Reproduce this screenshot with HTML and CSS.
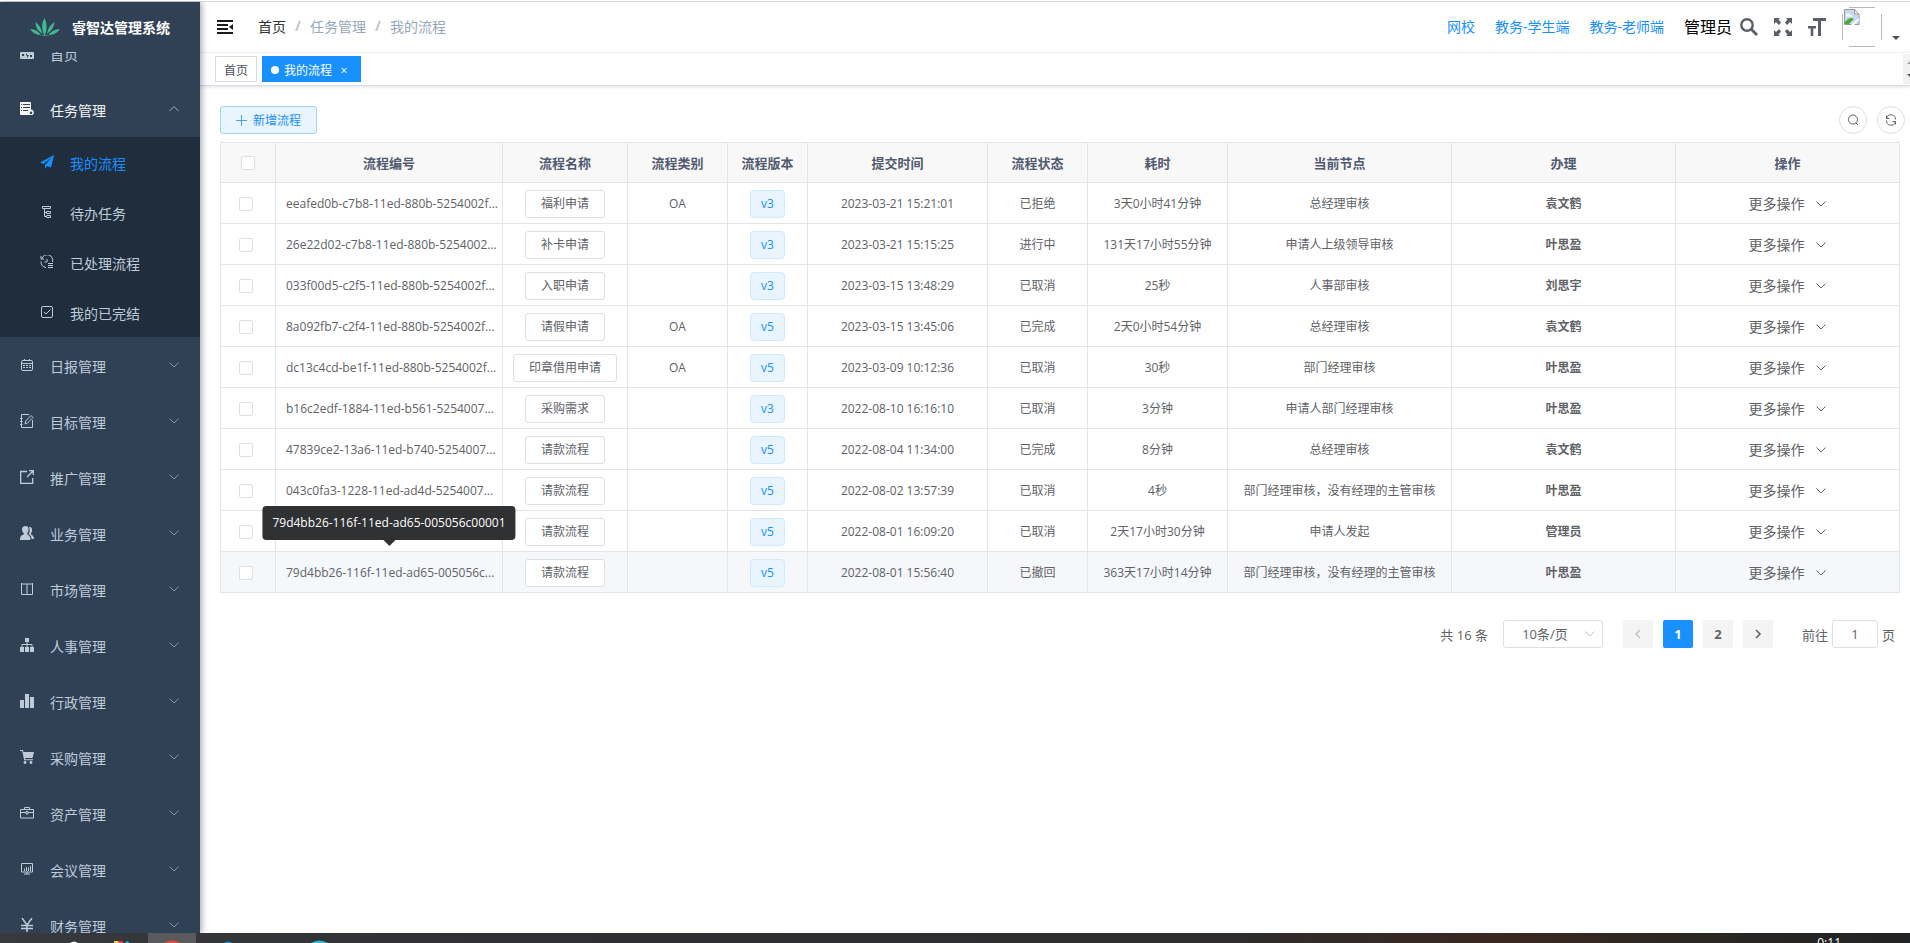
FILE: index.html
```html
<!DOCTYPE html>
<html lang="zh-CN">
<head>
<meta charset="utf-8">
<title>我的流程 - 睿智达管理系统</title>
<link rel="stylesheet" href="styles.css">
</head>
<body>
<svg class="sprite" aria-hidden="true">
  <symbol id="down" viewBox="0 0 12 12"><path d="M1.500 3.500 6 8l4.500-4.500" fill="none" stroke="currentColor"/></symbol>
  <symbol id="up" viewBox="0 0 12 12"><path d="M1.500 8 6 3.500 10.500 8" fill="none" stroke="currentColor"/></symbol>
  <symbol id="left" viewBox="0 0 12 12"><path d="M8 2 4 6l4 4" fill="none" stroke="currentColor" stroke-width="1.600"/></symbol>
  <symbol id="right" viewBox="0 0 12 12"><path d="m4 2 4 4-4 4" fill="none" stroke="currentColor" stroke-width="1.600"/></symbol>
  <symbol id="home" viewBox="0 0 14 14"><path fill="currentColor" fill-rule="evenodd" d="M1 6h12q1 0 1 1v5q0 1-1 1H1q-1 0-1-1V7q0-1 1-1ZM2 8v2h2V8Zm8 1v2h2V9ZM7 7 5.500 9.500H7V12l2-3H7Z"/></symbol>
  <symbol id="task" viewBox="0 0 14 14"><path fill="currentColor" fill-rule="evenodd" d="M1 0h9q1 0 1 1v6.500a3 3 0 0 1 1.500 5.500H1Q0 13 0 12V1Q0 0 1 0ZM1 2v1h1V2Zm2 0v1h7V2ZM1 5v1h1V5Zm2 0v1h7V5ZM1 8v1h1V8Zm2 0v1h5V8Zm8 1.500a1.300 1.300 0 1 0 .1 0Z"/></symbol>
  <symbol id="plane" viewBox="0 0 14 14"><path fill="currentColor" d="M14 0 0 7.500l3.500 1.500L12 2 5 10v4l2-3 4 1.500Z"/></symbol>
  <symbol id="tree" viewBox="0 0 14 14"><path d="M2.500 1.500h8v2h-8zM4.500 3.500v8h2M4.500 7.500h2M6.500 6.500h4v2h-4zM6.500 10.500h4v2h-4z" fill="none" stroke="currentColor"/></symbol>
  <symbol id="history" viewBox="0 0 14 14"><path d="M2 3.500A5.500 5.500 0 0 1 12.500 7M1 6.500a5.500 5.500 0 0 0 5 6M1 1v3h3M7 4v3H4.500" fill="none" stroke="currentColor"/><path d="M8 8.500h5M8 10.500h5M8 12.500h5" stroke="currentColor"/></symbol>
  <symbol id="done" viewBox="0 0 14 14"><rect x="1.500" y="1.500" width="11" height="11" rx="1.500" fill="none" stroke="currentColor"/><path d="m4 7 2 2 4.500-4.500" fill="none" stroke="currentColor"/></symbol>
  <symbol id="cal" viewBox="0 0 14 14"><rect x="1.500" y="2.500" width="11" height="10" rx="1.500" fill="none" stroke="currentColor"/><path d="M1 5.500h12M4.500 1v2M9.500 1v2" stroke="currentColor"/><path d="M3 7.500h8M3 9.500h8" stroke="currentColor" stroke-dasharray="2 1"/></symbol>
  <symbol id="edit" viewBox="0 0 14 14"><path d="M9 .5H1.500v13h11V6M0 4.500h2.500M0 7.500h2.500M0 10.500h2.500M5 10l.7-3L11 1.500l2 2L7.500 9Z" fill="none" stroke="currentColor"/></symbol>
  <symbol id="share" viewBox="0 0 14 14"><path d="M7 1.500H.7v12h12V8M7 7l6-6M9 .7h4.300V5" fill="none" stroke="currentColor" stroke-width="1.300"/></symbol>
  <symbol id="people" viewBox="0 0 14 14"><path fill="currentColor" d="M5.500 0Q9 0 8.500 4 8.300 6.500 7 7.500q.3 1 2 2 1.500 1 1.500 4.500H0Q0 10 2 9.300q2-.8 2-1.800Q2 6 2 3.500 2 0 5.500 0ZM9 1q3.500-.5 3 4-.3 2-1.500 3 3.500 1.500 3.500 5h-2.500Q11.500 9.500 8.500 8 10.500 5 9 1Z"/></symbol>
  <symbol id="cols" viewBox="0 0 14 14"><path d="M1 2h12M1.500 1v11.500h11V1M7 2v10.500" fill="none" stroke="currentColor"/></symbol>
  <symbol id="org" viewBox="0 0 14 14"><path fill="currentColor" d="M5 0h4v4H5zM0 9h4v5H0zM5 9h4v5H5zM10 9h4v5h-4z"/><path d="M7 4v5M2 9V6.500h10V9" fill="none" stroke="currentColor"/></symbol>
  <symbol id="bars" viewBox="0 0 14 14"><path fill="currentColor" d="M0 6h4v8H0zM5 0h4v14H5zM10 3h4v11h-4z"/></symbol>
  <symbol id="cart" viewBox="0 0 14 14"><path fill="currentColor" d="M0 0h3l.5 2H14l-1.500 6H5l.3 1.300H13v1H4.200L2.200 1H0z"/><circle cx="5" cy="12.500" r="1.400" fill="currentColor"/><circle cx="11" cy="12.500" r="1.400" fill="currentColor"/></symbol>
  <symbol id="case" viewBox="0 0 14 14"><path d="M.5 3.500h13v8.500H.5zM4.500 3.500v-2h5v2M.5 6.500H6M8 6.500h5.500M6 5.500h2V8H6z" fill="none" stroke="currentColor"/></symbol>
  <symbol id="board" viewBox="0 0 14 14"><path d="M1.500 1.500h11v8.500h-11zM7 10v2M4 12h6M4.500 9V6.500M6.500 9V5M8.500 9V5.500M10.500 9V4" fill="none" stroke="currentColor"/></symbol>
  <symbol id="yen" viewBox="0 0 14 14"><path d="m2 0 5 7 5-7M7 7v7M1 7.500h12M1 10.500h12" fill="none" stroke="currentColor" stroke-width="1.500"/></symbol>
</svg>

<div class="app">
  <aside class="sidebar">
    <a class="logo" href="#">
      <svg width="30" height="18" viewBox="0 0 30 18" fill="#43b692"><path d="M14 17Q10 7 14.500 0q4 8 .5 17ZM12.500 16Q5 11 5.500 4 11 8 12.500 16ZM17 16q1-8 7.500-12Q24 11 17 16ZM11 17Q4 17 0 11q7 0 11 6ZM18.500 17q4-6 11.500-6-4 6-11.500 6ZM10 18q5-1.500 10 0Z"/></svg>
      <span>睿智达管理系统</span>
    </a>
    <nav class="menu">
      <ul class="menu-list">
        <li><a class="item" href="#"><svg><use href="#home"/></svg><span>首页</span></a></li>
        <li><a class="item open" href="#"><svg><use href="#task"/></svg><span>任务管理</span><svg class="arrow"><use href="#up"/></svg></a>
          <ul class="submenu">
            <li><a class="item active" href="#"><svg><use href="#plane"/></svg><span>我的流程</span></a></li>
            <li><a class="item" href="#"><svg><use href="#tree"/></svg><span>待办任务</span></a></li>
            <li><a class="item" href="#"><svg><use href="#history"/></svg><span>已处理流程</span></a></li>
            <li><a class="item" href="#"><svg><use href="#done"/></svg><span>我的已完结</span></a></li>
          </ul>
        </li>
        <li><a class="item" href="#"><svg><use href="#cal"/></svg><span>日报管理</span><svg class="arrow"><use href="#down"/></svg></a></li>
        <li><a class="item" href="#"><svg><use href="#edit"/></svg><span>目标管理</span><svg class="arrow"><use href="#down"/></svg></a></li>
        <li><a class="item" href="#"><svg><use href="#share"/></svg><span>推广管理</span><svg class="arrow"><use href="#down"/></svg></a></li>
        <li><a class="item" href="#"><svg><use href="#people"/></svg><span>业务管理</span><svg class="arrow"><use href="#down"/></svg></a></li>
        <li><a class="item" href="#"><svg><use href="#cols"/></svg><span>市场管理</span><svg class="arrow"><use href="#down"/></svg></a></li>
        <li><a class="item" href="#"><svg><use href="#org"/></svg><span>人事管理</span><svg class="arrow"><use href="#down"/></svg></a></li>
        <li><a class="item" href="#"><svg><use href="#bars"/></svg><span>行政管理</span><svg class="arrow"><use href="#down"/></svg></a></li>
        <li><a class="item" href="#"><svg><use href="#cart"/></svg><span>采购管理</span><svg class="arrow"><use href="#down"/></svg></a></li>
        <li><a class="item" href="#"><svg><use href="#case"/></svg><span>资产管理</span><svg class="arrow"><use href="#down"/></svg></a></li>
        <li><a class="item" href="#"><svg><use href="#board"/></svg><span>会议管理</span><svg class="arrow"><use href="#down"/></svg></a></li>
        <li><a class="item" href="#"><svg><use href="#yen"/></svg><span>财务管理</span><svg class="arrow"><use href="#down"/></svg></a></li>
      </ul>
    </nav>
  </aside>

  <main class="main">
    <header class="navbar">
      <button class="plain" aria-label="收起菜单"><svg width="16" height="14" viewBox="0 0 16 14"><path d="M0 1h16M0 5h11M0 9h11M0 13h16" stroke="#1a1a1a" stroke-width="1.800"/><path d="M16 4v6l-4-3z" fill="#1a1a1a"/></svg></button>
      <nav class="crumbs"><a class="first" href="#">首页</a><i>/</i><span>任务管理</span><i>/</i><span>我的流程</span></nav>
      <div class="right">
        <a href="#">网校</a><a href="#">教务-学生端</a><a href="#">教务-老师端</a>
        <div class="tools">
          <span class="user">管理员</span>
          <button class="plain" aria-label="搜索"><svg width="18" height="18" viewBox="0 0 18 18"><circle cx="7" cy="7" r="5.700" fill="none" stroke="#5a5e66" stroke-width="2.400"/><path d="m11 11 6 6" stroke="#5a5e66" stroke-width="2.800"/></svg></button>
          <button class="plain" aria-label="全屏"><svg width="18" height="18" viewBox="0 0 18 18"><path fill="#5a5e66" d="M0 0h6L4.500 1.500 7 4.500 5 7 2 4 0 6zM18 0v6l-2-2-3 3-2-2.500 2.500-3L12 0zM0 18v-6l2 2 3-3 2 2.500-2.500 3L6 18zM18 18h-6l1.500-1.500-2.500-3 2-2.500 3 3 2-2z"/></svg></button>
          <button class="plain" aria-label="字号"><svg width="18" height="18" viewBox="0 0 18 18"><path fill="#5a5e66" d="M5 0h13v3h-5v15h-3V3H5zM0 8h8v2.500H5.300V18H2.700v-7.500H0z"/></svg></button>
          <button class="plain avatar" aria-label="用户菜单">
            <svg width="40" height="40" viewBox="0 0 40 40"><path d="M7 .5h26M7 39.500h26M.5 7v26M39.500 7v26" stroke="#b8b8b8"/><path d="M2.500 2.500h10l4.500 4.500v10.500h-14.500z" fill="#c9daf8" stroke="#9a9a9a"/><path d="M12.500 2.500V7H17z" fill="#fff" stroke="#9a9a9a"/><path d="M4 8q2-3 4 0h2v1.500H4z" fill="#fff"/><path d="M3 17v-2q5-6 9-3l-5 5z" fill="#4eaa2f"/><path d="m9 18 8-7v2l-5 5z" fill="#fff"/></svg>
            <svg width="8" height="4" viewBox="0 0 8 4"><path d="M0 0h8L4 4z" fill="#4a4f57"/></svg>
          </button>
        </div>
      </div>
    </header>

    <div class="tags">
      <a class="tag" href="#">首页</a>
      <a class="tag current" href="#"><b class="dot"></b>我的流程<span class="close">×</span></a>
      <div class="scroller"><svg width="7" height="30" viewBox="0 0 7 30"><path d="m7 7-3 3h3z" fill="#a3a3a3"/><path d="m4 20 3 3v-3z" fill="#505050"/></svg></div>
    </div>

    <section class="content">
      <div class="toolbar">
        <button class="add"><svg width="11" height="11" viewBox="0 0 11 11"><path d="M0 5.500h11M5.500 0v11" stroke="#1890ff" stroke-opacity=".8"/></svg>新增流程</button>
        <div class="round-group">
          <button class="round" aria-label="搜索"><svg width="12" height="12" viewBox="0 0 12 12" fill="none" stroke="#606266"><circle cx="6" cy="5.500" r="4.500"/><path d="m9 9 2 2"/></svg></button>
          <button class="round" aria-label="刷新"><svg width="12" height="12" viewBox="0 0 12 12" fill="none" stroke="#606266"><path d="M1.500 1.500V4.500h3M1.700 4A4.500 4.500 0 0 1 10.500 5.500M10.500 10.500v-3h-3M10.300 8A4.500 4.500 0 0 1 1.500 6.500"/></svg></button>
        </div>
      </div>

      <table class="grid">
        <colgroup><col class="c-check"><col class="c-id"><col class="c-name"><col class="c-100"><col class="c-80"><col class="c-180"><col class="c-100"><col class="c-140"><col><col><col></colgroup>
        <thead><tr><th><input type="checkbox" aria-label="全选"></th><th>流程编号</th><th>流程名称</th><th>流程类别</th><th>流程版本</th><th>提交时间</th><th>流程状态</th><th>耗时</th><th>当前节点</th><th>办理</th><th>操作</th></tr></thead>
        <tbody>
          <tr><td><input type="checkbox" aria-label="选择"></td><td class="id">eeafed0b-c7b8-11ed-880b-5254002f...</td><td><button class="name">福利申请</button></td><td>OA</td><td><span class="ver">v3</span></td><td>2023-03-21 15:21:01</td><td>已拒绝</td><td>3天0小时41分钟</td><td>总经理审核</td><td><b>袁文鹤</b></td><td><button class="more">更多操作<svg><use href="#down"/></svg></button></td></tr>
          <tr><td><input type="checkbox" aria-label="选择"></td><td class="id">26e22d02-c7b8-11ed-880b-5254002...</td><td><button class="name">补卡申请</button></td><td></td><td><span class="ver">v3</span></td><td>2023-03-21 15:15:25</td><td>进行中</td><td>131天17小时55分钟</td><td>申请人上级领导审核</td><td><b>叶思盈</b></td><td><button class="more">更多操作<svg><use href="#down"/></svg></button></td></tr>
          <tr><td><input type="checkbox" aria-label="选择"></td><td class="id">033f00d5-c2f5-11ed-880b-5254002f...</td><td><button class="name">入职申请</button></td><td></td><td><span class="ver">v3</span></td><td>2023-03-15 13:48:29</td><td>已取消</td><td>25秒</td><td>人事部审核</td><td><b>刘思宇</b></td><td><button class="more">更多操作<svg><use href="#down"/></svg></button></td></tr>
          <tr><td><input type="checkbox" aria-label="选择"></td><td class="id">8a092fb7-c2f4-11ed-880b-5254002f...</td><td><button class="name">请假申请</button></td><td>OA</td><td><span class="ver">v5</span></td><td>2023-03-15 13:45:06</td><td>已完成</td><td>2天0小时54分钟</td><td>总经理审核</td><td><b>袁文鹤</b></td><td><button class="more">更多操作<svg><use href="#down"/></svg></button></td></tr>
          <tr><td><input type="checkbox" aria-label="选择"></td><td class="id">dc13c4cd-be1f-11ed-880b-5254002f...</td><td><button class="name">印章借用申请</button></td><td>OA</td><td><span class="ver">v5</span></td><td>2023-03-09 10:12:36</td><td>已取消</td><td>30秒</td><td>部门经理审核</td><td><b>叶思盈</b></td><td><button class="more">更多操作<svg><use href="#down"/></svg></button></td></tr>
          <tr><td><input type="checkbox" aria-label="选择"></td><td class="id">b16c2edf-1884-11ed-b561-5254007...</td><td><button class="name">采购需求</button></td><td></td><td><span class="ver">v3</span></td><td>2022-08-10 16:16:10</td><td>已取消</td><td>3分钟</td><td>申请人部门经理审核</td><td><b>叶思盈</b></td><td><button class="more">更多操作<svg><use href="#down"/></svg></button></td></tr>
          <tr><td><input type="checkbox" aria-label="选择"></td><td class="id">47839ce2-13a6-11ed-b740-5254007...</td><td><button class="name">请款流程</button></td><td></td><td><span class="ver">v5</span></td><td>2022-08-04 11:34:00</td><td>已完成</td><td>8分钟</td><td>总经理审核</td><td><b>袁文鹤</b></td><td><button class="more">更多操作<svg><use href="#down"/></svg></button></td></tr>
          <tr><td><input type="checkbox" aria-label="选择"></td><td class="id">043c0fa3-1228-11ed-ad4d-5254007...</td><td><button class="name">请款流程</button></td><td></td><td><span class="ver">v5</span></td><td>2022-08-02 13:57:39</td><td>已取消</td><td>4秒</td><td>部门经理审核，没有经理的主管审核</td><td><b>叶思盈</b></td><td><button class="more">更多操作<svg><use href="#down"/></svg></button></td></tr>
          <tr><td><input type="checkbox" aria-label="选择"></td><td></td><td><button class="name">请款流程</button></td><td></td><td><span class="ver">v5</span></td><td>2022-08-01 16:09:20</td><td>已取消</td><td>2天17小时30分钟</td><td>申请人发起</td><td><b>管理员</b></td><td><button class="more">更多操作<svg><use href="#down"/></svg></button></td></tr>
          <tr class="hover"><td><input type="checkbox" aria-label="选择"></td><td class="id">79d4bb26-116f-11ed-ad65-005056c...<div class="tip" role="tooltip">79d4bb26-116f-11ed-ad65-005056c00001</div></td><td><button class="name">请款流程</button></td><td></td><td><span class="ver">v5</span></td><td>2022-08-01 15:56:40</td><td>已撤回</td><td>363天17小时14分钟</td><td>部门经理审核，没有经理的主管审核</td><td><b>叶思盈</b></td><td><button class="more">更多操作<svg><use href="#down"/></svg></button></td></tr>
        </tbody>
      </table>

      <div class="pager">
        <span>共 16 条</span>
        <label class="size"><select aria-label="每页条数"><option>10条/页</option></select><svg><use href="#down"/></svg></label>
        <div class="pages">
          <button disabled aria-label="上一页"><svg><use href="#left"/></svg></button>
          <button class="on">1</button>
          <button>2</button>
          <button aria-label="下一页"><svg><use href="#right"/></svg></button>
        </div>
        <label class="jump">前往<input type="text" value="1">页</label>
      </div>
    </section>
  </main>
</div>

<footer class="taskbar">
  <svg width="340" height="10" viewBox="0 0 340 10"><path d="M148 0h48v10h-48z" fill="#5a5a5c"/><path d="M70 10q4-3 8 0z" fill="#fff"/><path d="M114 8h5l2 2h-7z" fill="#f7c945"/><path d="M118 8h5v2h-4z" fill="#e8394c"/><path d="m125 10 2-2 3 2z" fill="#1fb5d8"/><path d="M163 10q9-5 18 0z" fill="#dd4b3e"/><path d="M224 10q4-3 8 0z" fill="#1c8fd6"/><path d="M311 10q8-5 17 0z" fill="#2cc0d8"/></svg>
  <time>0:11</time>
</footer>
</body>
</html>
```

FILE: styles.css
```css
* { box-sizing: border-box; }
body {
  margin: 0;
  height: 100vh;
  display: flex;
  flex-direction: column;
  overflow: hidden;
  border-top: 1px solid #fff;
  font-family: "Open Sans", "Noto Sans CJK SC", sans-serif;
  font-size: 12px;
  color: #606266;
  background: #fff;
}
a { color: inherit; text-decoration: none; }
ul { list-style: none; margin: 0; padding: 0; }
button, input, select { font: inherit; color: inherit; margin: 0; }
button { cursor: pointer; }
.sprite { display: none; }
.plain { display: flex; padding: 0; border: 0; background: none; }

.app { flex: 1; min-height: 0; display: flex; border-top: 1px solid #d9dcdf; }

/* Sidebar */
.sidebar {
  width: 200px;
  flex: none;
  display: flex;
  flex-direction: column;
  background: #304156;
  box-shadow: 2px 0 6px rgba(0, 21, 41, .35);
  z-index: 1;
}
.logo {
  flex: none;
  height: 50px;
  display: flex;
  align-items: center;
  justify-content: center;
  gap: 12px;
  color: #fff;
  font-size: 14px;
  font-weight: 700;
}
.menu { flex: 1; min-height: 0; overflow: hidden; }
/* List is scrolled slightly past its first entry */
.menu-list { margin-top: -27px; }
.item {
  height: 56px;
  display: flex;
  align-items: center;
  padding: 0 20px;
  gap: 16px;
  color: #bfcbd9;
  font-size: 14px;
}
.item svg { width: 14px; height: 14px; flex: none; }
.item span { padding-top: 1px; }
.item .arrow { width: 12px; height: 12px; margin-left: auto; opacity: .6; }
.item.open { color: #f4f4f5; }
.submenu { background: #1f2d3d; }
.submenu .item { height: 50px; padding-left: 40px; }
.submenu .active { color: #1890ff; }

/* Top bar */
.main { flex: 1; min-width: 0; display: flex; flex-direction: column; }
.navbar {
  height: 50px;
  flex: none;
  display: flex;
  align-items: center;
  padding: 0 10px 0 17px;
  gap: 25px;
  font-size: 14px;
}
.crumbs { display: flex; padding-bottom: 2px; color: #97a8be; }
.crumbs .first { color: #303133; }
.crumbs i { width: 24px; text-align: center; font-style: normal; font-weight: 700; color: #c0c4cc; }
.right { margin-left: auto; display: flex; align-items: center; gap: 20px; color: #1890ff; }
.right > a { padding-bottom: 2px; }
.tools { display: flex; align-items: center; gap: 16px; }
.user { margin-right: -8px; padding-bottom: 2px; font-size: 16px; color: #000; }
.avatar { align-items: flex-end; gap: 10px; }
.avatar svg:last-child { margin-bottom: 7px; }

.tags {
  height: 34px;
  flex: none;
  display: flex;
  align-items: center;
  gap: 5px;
  padding-left: 15px;
  border-top: 1px solid #f0f0f0;
  border-bottom: 1px solid #d8dce5;
  box-shadow: 0 1px 3px rgba(0, 0, 0, .12);
}
.tag {
  height: 26px;
  display: flex;
  align-items: center;
  padding: 2px 8px 0;
  border: 1px solid #d8dce5;
  color: #495060;
}
.tag.current { background: #1890ff; border-color: #1890ff; color: #fff; }
.dot { width: 8px; height: 8px; margin-right: 5px; border-radius: 50%; background: #fff; }
.close { width: 16px; margin-left: 4px; text-align: center; }
.scroller { margin-left: auto; height: 30px; background: #f1f1f1; }

/* Content */
.content { padding: 20px 5px 20px 20px; }
.toolbar { display: flex; justify-content: space-between; margin-bottom: 8px; }
.add {
  height: 28px;
  display: flex;
  align-items: center;
  gap: 6px;
  padding: 0 15px;
  border: 1px solid #a3d3ff;
  border-radius: 3px;
  background: #e8f4ff;
  color: #1890ff;
}
.round-group { display: flex; gap: 10px; }
.round {
  width: 28px;
  height: 28px;
  display: grid;
  place-items: center;
  padding: 0;
  border: 1px solid #dcdfe6;
  border-radius: 50%;
  background: #fff;
}
.grid {
  width: calc(100% - 5px);
  table-layout: fixed;
  border-collapse: separate;
  border-spacing: 0;
  border: 1px solid #dfe6ec;
  border-bottom: 0;
  border-right: 0;
  line-height: 20px;
}
.c-check { width: 55px; }
.c-id { width: 227px; }
.c-name { width: 125px; }
.c-100 { width: 100px; }
.c-80 { width: 80px; }
.c-180 { width: 180px; }
.c-140 { width: 140px; }
.grid th, .grid td {
  height: 41px;
  padding: 0;
  text-align: center;
  white-space: nowrap;
  border-right: 1px solid #dfe6ec;
  border-bottom: 1px solid #dfe6ec;
}
.grid td { padding-top: 1px; }
.grid th { height: 40px; background: #f8f8f9; color: #515a6e; font-size: 13px; }
.grid .id { position: relative; padding-left: 10px; text-align: left; }
.grid .hover td { background: #f5f7fa; }
.grid input {
  appearance: none;
  display: block;
  width: 14px;
  height: 14px;
  margin: 0 auto 0 18px;
  border: 1px solid #dcdfe6;
  border-radius: 2px;
  background: #fff;
}
.grid th input { margin: 0 auto; }
.name, .ver {
  display: inline-block;
  height: 28px;
  padding: 0 15px;
  line-height: 26px;
  vertical-align: middle;
  border: 1px solid #dcdfe6;
  border-radius: 3px;
  background: #fff;
}
.ver { padding: 0 10px; border-color: #d1e9ff; border-radius: 4px; background: #e8f4ff; color: #1890ff; }
.more {
  display: inline-flex;
  align-items: center;
  gap: 10px;
  padding: 0;
  border: 0;
  background: none;
  font-size: 14px;
  vertical-align: middle;
}
.more svg { width: 12px; height: 12px; }
.tip {
  position: absolute;
  left: 50%;
  bottom: calc(100% + 12px);
  transform: translateX(-50%);
  padding: 10px;
  border-radius: 4px;
  background: #303133;
  color: #fff;
  line-height: 14px;
}
.tip::after {
  content: "";
  position: absolute;
  top: 100%;
  left: 50%;
  margin-left: -6px;
  border: 6px solid transparent;
  border-top-color: #303133;
  border-bottom: 0;
}

/* Pagination */
.pager {
  display: flex;
  align-items: center;
  justify-content: flex-end;
  margin-top: 27px;
  padding-right: 10px;
  font-size: 13px;
}
.size { position: relative; margin: 0 20px 0 15px; }
.size select {
  appearance: none;
  display: block;
  width: 100px;
  height: 28px;
  padding: 0 16px 0 0;
  text-align: center;
  text-align-last: center;
  border: 1px solid #dcdfe6;
  border-radius: 3px;
  background: #fff;
}
.size svg { position: absolute; right: 7px; top: 8px; width: 12px; height: 12px; color: #c0c4cc; }
.pages { display: flex; gap: 10px; }
.pages button {
  width: 30px;
  height: 28px;
  display: grid;
  place-items: center;
  padding: 0;
  border: 0;
  border-radius: 2px;
  background: #f4f4f5;
  font-weight: 700;
}
.pages svg { width: 12px; height: 12px; }
.pages button:disabled { color: #c0c4cc; }
.pages .on { background: #1890ff; color: #fff; }
.jump { display: flex; align-items: center; gap: 4px; margin-left: 29px; }
.jump input {
  width: 46px;
  height: 28px;
  padding: 0;
  text-align: center;
  border: 1px solid #dcdfe6;
  border-radius: 3px;
}

/* Desktop task bar */
.taskbar {
  height: 10px;
  flex: none;
  display: flex;
  justify-content: space-between;
  overflow: hidden;
  padding-right: 69px;
  background: linear-gradient(90deg, #37393a, #2f2f34 30%, #2e2c2c 65%, #3a2820 79%, #2b2723 88%, #222324);
  color: #fff;
  z-index: 2;
}
.taskbar time { padding-top: 2px; line-height: 16px; }
```
